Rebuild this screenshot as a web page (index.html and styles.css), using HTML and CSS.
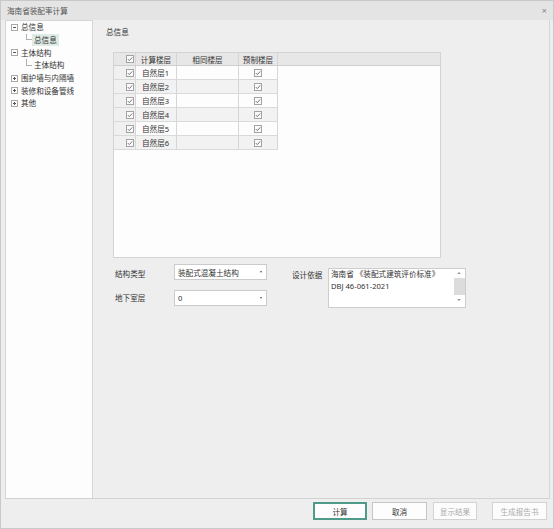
FILE: index.html
```html
<!DOCTYPE html>
<html lang="zh">
<head>
<meta charset="utf-8">
<title>海南省装配率计算</title>
<link rel="stylesheet" href="styles.css">
</head>
<body>
<svg class="defs" width="0" height="0">
  <symbol id="ck" viewBox="0 0 8 8">
    <rect x="0.5" y="0.5" width="7" height="7" fill="#fbfbfb" stroke="#a3a3a3"/>
    <path d="M1.8 4.1 L3.3 5.6 L6.2 2.4" fill="none" stroke="#666" stroke-width="0.9"/>
  </symbol>
  <symbol id="minus" viewBox="0 0 7 7">
    <rect x="0.5" y="0.5" width="6" height="6" fill="#fff" stroke="#a8a8a8"/>
    <path d="M2 3.5 H5" stroke="#555" stroke-width="1"/>
  </symbol>
  <symbol id="plus" viewBox="0 0 7 7">
    <rect x="0.5" y="0.5" width="6" height="6" fill="#fff" stroke="#a8a8a8"/>
    <path d="M2 3.5 H5 M3.5 2 V5" stroke="#555" stroke-width="1"/>
  </symbol>
</svg>
<div class="window">
  <div class="titlebar"><span class="title">海南省装配率计算</span><span class="close">×</span></div>
  <div class="main">
    <div class="tree">
      <div class="node"><svg class="exp"><use href="#minus"/></svg><span class="lbl">总信息</span></div>
      <div class="node child"><span class="branch"></span><span class="lbl sel">总信息</span></div>
      <div class="node"><svg class="exp"><use href="#minus"/></svg><span class="lbl">主体结构</span></div>
      <div class="node child"><span class="branch"></span><span class="lbl">主体结构</span></div>
      <div class="node"><svg class="exp"><use href="#plus"/></svg><span class="lbl">围护墙与内隔墙</span></div>
      <div class="node"><svg class="exp"><use href="#plus"/></svg><span class="lbl">装修和设备管线</span></div>
      <div class="node"><svg class="exp"><use href="#plus"/></svg><span class="lbl">其他</span></div>
    </div>
    <div class="content">
      <div class="heading">总信息</div>
      <div class="grid">
        <div class="ghead">
          <div class="cell c0"><svg class="cb"><use href="#ck"/></svg></div>
          <div class="cell c1 hc">计算楼层</div>
          <div class="cell c2">相同楼层</div>
          <div class="cell c3">预制楼层</div>
        </div>
        <div class="row"><div class="cell c0"><svg class="cb"><use href="#ck"/></svg></div><div class="cell c1">自然层1</div><div class="cell c2"></div><div class="cell c3"><svg class="cb"><use href="#ck"/></svg></div></div>
        <div class="row alt"><div class="cell c0"><svg class="cb"><use href="#ck"/></svg></div><div class="cell c1">自然层2</div><div class="cell c2"></div><div class="cell c3"><svg class="cb"><use href="#ck"/></svg></div></div>
        <div class="row"><div class="cell c0"><svg class="cb"><use href="#ck"/></svg></div><div class="cell c1">自然层3</div><div class="cell c2"></div><div class="cell c3"><svg class="cb"><use href="#ck"/></svg></div></div>
        <div class="row alt"><div class="cell c0"><svg class="cb"><use href="#ck"/></svg></div><div class="cell c1">自然层4</div><div class="cell c2"></div><div class="cell c3"><svg class="cb"><use href="#ck"/></svg></div></div>
        <div class="row"><div class="cell c0"><svg class="cb"><use href="#ck"/></svg></div><div class="cell c1">自然层5</div><div class="cell c2"></div><div class="cell c3"><svg class="cb"><use href="#ck"/></svg></div></div>
        <div class="row alt"><div class="cell c0"><svg class="cb"><use href="#ck"/></svg></div><div class="cell c1">自然层6</div><div class="cell c2"></div><div class="cell c3"><svg class="cb"><use href="#ck"/></svg></div></div>
      </div>
      <div class="form">
        <div class="fcol">
          <div class="frow top"><span class="flabel low">结构类型</span><div class="combo"><span>装配式混凝土结构</span><span class="arrow"></span></div></div>
          <div class="frow"><span class="flabel">地下室层</span><div class="combo"><span>0</span><span class="arrow"></span></div></div>
        </div>
        <div class="right">
          <span class="rlabel">设计依据</span>
          <div class="textarea">
            <div class="ttext">海南省 《装配式建筑评价标准》<br>DBJ 46-061-2021</div>
            <div class="sbar"><span class="up"></span><span class="thumb"></span><span class="down"></span></div>
          </div>
        </div>
      </div>
    </div>
  </div>
  <div class="footer">
    <button class="btn b1 default">计算</button>
    <button class="btn b2">取消</button>
    <button class="btn b3" disabled>显示结果</button>
    <button class="btn b4" disabled>生成报告书</button>
  </div>
</div>
</body>
</html>
```

FILE: styles.css
```css
* { box-sizing: border-box; }
html, body { margin: 0; padding: 0; }
body {
  width: 554px;
  height: 529px;
  font-family: "Noto Sans", "Noto Sans CJK SC", sans-serif;
  font-size: 7.6px;
  color: #333;
  background: #eeeeee;
  overflow: hidden;
}
.defs { position: absolute; width: 0; height: 0; }
.window {
  width: 554px;
  height: 529px;
  border: 1px solid #c9c9c9;
  display: flex;
  flex-direction: column;
  background: #eeeeee;
}
.titlebar {
  height: 19px;
  flex: none;
  background: #e4e4e4;
  display: flex;
  align-items: center;
  justify-content: space-between;
  padding: 0 6px 0 6px;
  color: #555;
}
.close { font-size: 9px; color: #888; line-height: 1; }
.main {
  flex: none;
  height: 479px;
  margin: 0 3px 0 4px;
  border-right: 1px solid #d6d6d6;
  border-bottom: 1px solid #d2d2d2;
  display: flex;
}
.tree {
  flex: none;
  width: 88px;
  border: 1px solid #d6d6d6;
  border-bottom: none;
  background: #fdfdfd;
}
.node {
  height: 12.7px;
  display: flex;
  align-items: center;
  padding-left: 5px;
}
.exp { width: 7px; height: 7px; flex: none; }
.node .lbl { margin-left: 3px; line-height: 12px; white-space: nowrap; }
.node.child { padding-left: 20px; align-items: flex-start; }
.branch {
  width: 6px;
  height: 6.5px;
  flex: none;
  border-left: 1px solid #b0b0b0;
  border-bottom: 1px solid #b0b0b0;
}
.node.child .lbl { margin-left: 0; padding: 0 2px; height: 12.7px; line-height: 12.7px; }
.lbl.sel { background: #dfebe6; }
.content {
  flex: 1;
  padding: 6px 0 0 13px;
}
.heading { height: 12px; line-height: 12px; }
.grid {
  margin: 14px 0 0 7px;
  width: 328px;
  height: 206px;
  border: 1px solid #d3d3d3;
  background: #fdfdfd;
}
.ghead {
  height: 13px;
  display: flex;
  background: #e7e7e7;
  border-bottom: 1px solid #cfcfcf;
}
.cell {
  height: 100%;
  border-right: 1px solid #d6d6d6;
  display: flex;
  align-items: center;
  justify-content: center;
  white-space: nowrap;
}
.c0 { width: 22px; justify-content: flex-end; padding-right: 1px; }
.c1 { width: 41px; }
.c2 { width: 62px; }
.c3 { width: 39px; }
.row {
  width: 164px;
  height: 14px;
  display: flex;
  border-bottom: 1px solid #dadada;
}
.row .c0 { background: #f0f0f0; }
.row .c1 { justify-content: flex-start; padding-left: 6px; }
.row.alt .c1, .row.alt .c2, .row.alt .c3 { background: #f2f2f2; }
.cb { width: 8px; height: 8px; flex: none; }
.form {
  display: flex;
  margin: 6px 0 0 9px;
}
.fcol { display: flex; flex-direction: column; gap: 10px; }
.frow { display: flex; align-items: center; height: 16px; }
.frow.top { align-items: flex-start; }
.flabel { width: 59px; line-height: 12px; }
.flabel.low { margin-top: 4px; }
.combo {
  width: 93px;
  height: 16px;
  border: 1px solid #cbcbcb;
  background: #fff;
  display: flex;
  align-items: center;
  justify-content: space-between;
  padding: 0 4px 0 3px;
}
.arrow {
  width: 0;
  height: 0;
  border-left: 1.5px solid transparent;
  border-right: 1.5px solid transparent;
  border-top: 2px solid #555;
}
.right { display: flex; margin-left: 25px; }
.rlabel { width: 36px; margin-top: 5px; line-height: 12px; }
.textarea {
  width: 138px;
  height: 40px;
  margin-top: 4px;
  border: 1px solid #cdcdcd;
  background: #fff;
  display: flex;
}
.ttext {
  flex: 1;
  padding: 0 0 0 2px;
  line-height: 11.5px;
  margin-top: 0;
  white-space: nowrap;
}
.sbar {
  width: 12px;
  flex: none;
  display: flex;
  flex-direction: column;
  align-items: center;
  padding: 3px 0 2px;
}
.up, .down {
  width: 0;
  height: 0;
  border-left: 2px solid transparent;
  border-right: 2px solid transparent;
}
.up { border-bottom: 2.5px solid #9a9a9a; }
.down { border-top: 2.5px solid #9a9a9a; }
.thumb {
  width: 11px;
  height: 17px;
  background: #dcdcdc;
  margin: 4px 0 4px;
}
.footer {
  flex: none;
  height: 29px;
  display: flex;
  justify-content: flex-end;
  align-items: flex-start;
  padding: 3px 6px 0 0;
}
.btn {
  height: 18px;
  padding: 0;
  font-family: inherit;
  font-size: 7.6px;
  color: #333;
  background: #fdfdfd;
  border: 1px solid #c6c6c6;
  border-radius: 0;
}
.btn.default { border: 2px solid #4f9a88; }
.btn:disabled { color: #ababab; border-color: #d3d3d3; background: #fcfcfc; }
.b1 { width: 54px; margin-right: 5px; }
.b2 { width: 55px; margin-right: 6px; }
.b3 { width: 44px; margin-right: 15px; }
.b4 { width: 55px; }
```
